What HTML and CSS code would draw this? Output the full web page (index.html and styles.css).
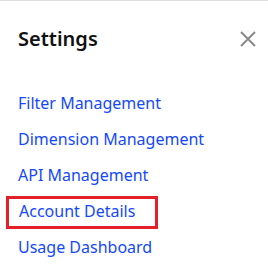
FILE: index.html
```html
<!DOCTYPE html>
<html lang="en">
<head>
  <meta charset="UTF-8">
  <meta name="viewport" content="width=device-width, initial-scale=1.0">
  <title>Settings</title>
  <link rel="stylesheet" href="styles.css">
</head>
<body>
  <aside class="settings-panel">
    <header class="panel-header">
      <h2>Settings</h2>
      <button class="close-btn" aria-label="Close">
        <svg width="16" height="16" viewBox="0 0 16 16">
          <path d="M1 1 L15 15 M15 1 L1 15" stroke="#8a8a8a" stroke-width="2" fill="none"/>
        </svg>
      </button>
    </header>

    <nav class="settings-nav">
      <a href="#" class="nav-link">Filter Management</a>
      <a href="#" class="nav-link">Dimension Management</a>
      <a href="#" class="nav-link">API Management</a>
      <a href="#" class="nav-link is-active">Account Details</a>
      <a href="#" class="nav-link">Usage Dashboard</a>
    </nav>
  </aside>
</body>
</html>
```

FILE: styles.css
```css
/* Variables and Reset */
:root {
  --link-color: #1448ff;
  --text-color: #111111;
  --icon-color: #8a8a8a;
  --border-color: #dedede;
  --highlight-color: #e3202a;
}

* {
  margin: 0;
  padding: 0;
  box-sizing: border-box;
}

body {
  font-family: "Noto Sans", "Open Sans", sans-serif;
  background-color: #ffffff;
  color: var(--text-color);
}

/* Panel */
.settings-panel {
  border-top: 1px solid var(--border-color);
  min-height: 100vh;
}

.panel-header {
  display: flex;
  align-items: center;
  justify-content: space-between;
  padding: 24px 12px 0 18px;
}

.panel-header h2 {
  font-size: 20px;
  font-weight: 600;
  line-height: 28px;
}

.close-btn {
  display: flex;
  background: none;
  border: none;
  cursor: pointer;
}

/* Navigation */
.settings-nav {
  display: flex;
  flex-direction: column;
  margin-top: 32px;
}

.nav-link {
  display: block;
  padding: 0 18px;
  font-size: 16px;
  line-height: 36px;
  color: var(--link-color);
  text-decoration: none;
}

.nav-link.is-active {
  width: 152px;
  margin: 3px 0 0 6px;
  padding: 0 19px 3px 10px;
  border: 3px solid var(--highlight-color);
  line-height: 24px;
}
```
